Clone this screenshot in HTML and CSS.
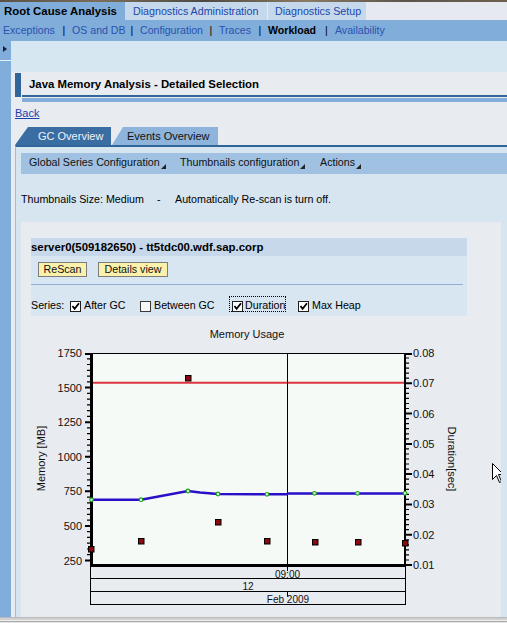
FILE: index.html
```html
<!DOCTYPE html>
<html>
<head>
<meta charset="utf-8">
<title>Java Memory Analysis</title>
<link rel="stylesheet" href="styles.css">
</head>
<body>
<div class="strip"></div>
<div class="l1">
  <div class="t1 sel">Root Cause Analysis</div>
  <div class="t1 da">Diagnostics Administration</div>
  <div class="t1 ds">Diagnostics Setup</div>
</div>
<div class="l2">
  <span class="lk w1">Exceptions</span><span class="sep">|</span><span class="lk w2">OS and DB</span><span class="sep">|</span><span class="lk w3">Configuration</span><span class="sep">|</span><span class="lk w4">Traces</span><span class="sep">|</span><span class="lk w5 cur">Workload</span><span class="sep s5">|</span><span class="lk">Availability</span>
</div>
<div class="main">
  <div class="side"><div class="tog"></div></div>
  <div class="content">
    <div class="banner"></div>
    <div class="page">
      <div class="ptitle"><div class="pbar"></div><div class="ptext">Java Memory Analysis - Detailed Selection</div></div>
      <div class="pstripe"></div>
      <div class="back"><a href="#">Back</a></div>
      <div class="tabs"><div class="tab on">GC Overview</div><div class="tab off">Events Overview</div></div>
      <div class="panel">
        <div class="tbar">
          <span class="it i1">Global Series Configuration<span class="tri"></span></span>
          <span class="it i2">Thumbnails configuration<span class="tri"></span></span>
          <span class="it">Actions<span class="tri"></span></span>
        </div>
        <div class="info"><span class="sz">Thumbnails Size: Medium</span><span class="dash">-</span><span class="auto">Automatically Re-scan is turn off.</span></div>
        <div class="card">
          <div class="srv">
            <div class="srvh">server0(509182650) - tt5tdc00.wdf.sap.corp</div>
            <div class="srvb">
              <div class="btns"><span class="btn b1">ReScan</span><span class="btn b2">Details view</span></div>
              <div class="hr"></div>
              <div class="series">
                <span class="lbl l0t">Series:</span>
                <span class="cb"><svg width="9" height="9" viewBox="0 0 9 9"><polyline points="1.5,4 3.6,6.8 8,1.2" fill="none" stroke="#000" stroke-width="1.8"/></svg></span>
                <span class="lbl l1t">After GC</span>
                <span class="cb un"></span>
                <span class="lbl l2t">Between GC</span>
                <span class="focus">
                  <span class="cb"><svg width="9" height="9" viewBox="0 0 9 9"><polyline points="1.5,4 3.6,6.8 8,1.2" fill="none" stroke="#000" stroke-width="1.8"/></svg></span>
                  <span class="lbl l3t">Duration</span>
                </span>
                <span class="cb c4"><svg width="9" height="9" viewBox="0 0 9 9"><polyline points="1.5,4 3.6,6.8 8,1.2" fill="none" stroke="#000" stroke-width="1.8"/></svg></span>
                <span class="lbl l4t">Max Heap</span>
              </div>
            </div>
          </div>
          <svg class="chart" width="480" height="301" viewBox="21 316 480 301">
            <text x="247" y="338" text-anchor="middle">Memory Usage</text>
            <rect x="92" y="353" width="313" height="212" fill="#F5FAF6"/>
            <line x1="90" y1="353.5" x2="406" y2="353.5" stroke="#000"/>
            <rect x="90" y="353" width="3" height="214"/>
            <rect x="404" y="353" width="2" height="214"/>
            <rect x="90" y="564" width="316" height="3"/>
            <path d="M85 354H90M85 387.6H90M85 422.2H90M85 456.8H90M85 491.3H90M85 525.9H90M85 560.5H90" stroke="#000" stroke-width="2"/>
            <path d="M87 358.8H90M87 364.5H90M87 370.3H90M87 376.1H90M87 381.8H90M87 393.4H90M87 399.1H90M87 404.9H90M87 410.6H90M87 416.4H90M87 427.9H90M87 433.7H90M87 439.5H90M87 445.2H90M87 451H90M87 462.5H90M87 468.3H90M87 474H90M87 479.8H90M87 485.6H90M87 497.1H90M87 502.9H90M87 508.6H90M87 514.4H90M87 520.2H90M87 531.7H90M87 537.4H90M87 543.2H90M87 549H90M87 554.7H90" stroke="#000" stroke-width="1.2"/>
            <path d="M406 354H412M406 383.3H412M406 413.6H412M406 443.9H412M406 474.1H412M406 504.4H412M406 534.7H412M406 565H412" stroke="#000" stroke-width="2"/>
            <path d="M406 358H409M406 363.1H409M406 368.1H409M406 373.2H409M406 378.2H409M406 388.3H409M406 393.4H409M406 398.4H409M406 403.5H409M406 408.5H409M406 418.6H409M406 423.7H409M406 428.7H409M406 433.8H409M406 438.8H409M406 448.9H409M406 454H409M406 459H409M406 464H409M406 469.1H409M406 479.2H409M406 484.2H409M406 489.3H409M406 494.3H409M406 499.4H409M406 509.5H409M406 514.5H409M406 519.6H409M406 524.6H409M406 529.7H409M406 539.8H409M406 544.8H409M406 549.9H409M406 554.9H409M406 560H409" stroke="#000" stroke-width="1.2"/>
            <line x1="93" y1="382.7" x2="404" y2="382.7" stroke="#DF3440" stroke-width="2"/>
            <path d="M287.5 354V571M287.5 591.5V596.5" stroke="#000"/>
            <polyline points="92,499.7 141,499.7 188,491 200,492.6 218,494 287,494.3 288,493.5 404,493.5" fill="none" stroke="#2A0FC8" stroke-width="2.5"/>
            <g fill="#D6FFD0" stroke="#1DA51D" stroke-width="1.2">
              <circle cx="91.5" cy="499.7" r="1.8"/>
              <circle cx="141" cy="499.7" r="1.8"/>
              <circle cx="188" cy="491" r="1.8"/>
              <circle cx="218" cy="494" r="1.8"/>
              <circle cx="267" cy="494.3" r="1.8"/>
              <circle cx="314.5" cy="493.3" r="1.8"/>
              <circle cx="357.5" cy="493.3" r="1.8"/>
              <circle cx="405" cy="493.3" r="1.8"/>
            </g>
            <g fill="#8A0A10" stroke="#000" stroke-width="1">
              <rect x="88.5" y="546.5" width="5.5" height="5.5"/>
              <rect x="138.5" y="538.5" width="5.5" height="5.5"/>
              <rect x="185.5" y="375.5" width="5.5" height="5.5"/>
              <rect x="215.5" y="519.5" width="5.5" height="5.5"/>
              <rect x="264.5" y="538.5" width="5.5" height="5.5"/>
              <rect x="312.5" y="539.5" width="5.5" height="5.5"/>
              <rect x="355.5" y="539.5" width="5.5" height="5.5"/>
              <rect x="402.5" y="540.5" width="5.5" height="5.5"/>
            </g>
            <rect x="90.5" y="566.5" width="315" height="38" fill="none" stroke="#000"/>
            <path d="M90.5 578.5H405.5M90.5 591.5H405.5" stroke="#000"/>
            <g class="yl" text-anchor="end">
              <text x="82" y="357">1750</text>
              <text x="82" y="391.6">1500</text>
              <text x="82" y="426.2">1250</text>
              <text x="82" y="460.8">1000</text>
              <text x="82" y="495.3">750</text>
              <text x="82" y="529.9">500</text>
              <text x="82" y="564.5">250</text>
            </g>
            <g class="yl">
              <text x="413" y="357">0.08</text>
              <text x="413" y="387.3">0.07</text>
              <text x="413" y="417.6">0.06</text>
              <text x="413" y="447.9">0.05</text>
              <text x="413" y="478.1">0.04</text>
              <text x="413" y="508.4">0.03</text>
              <text x="413" y="538.7">0.02</text>
              <text x="413" y="569">0.01</text>
            </g>
            <g class="xl" text-anchor="middle">
              <text x="287.5" y="577.5">09:00</text>
              <text x="248" y="589.5">12</text>
              <text x="288" y="602.7">Feb 2009</text>
            </g>
            <text transform="translate(44.5 458.5) rotate(-90)" text-anchor="middle">Memory [MB]</text>
            <text transform="translate(447.5 459) rotate(90)" text-anchor="middle">Duration[sec]</text>
            <path d="M492.5 463.5V479.5L496.5 475.5L499.5 482.5L501.5 481.5L498.5 474.5H503.5Z" fill="#fff" stroke="#000" stroke-width="1"/>
          </svg>
        </div>
      </div>
    </div>
  </div>
</div>
<div class="hscroll"></div>
</body>
</html>
```

FILE: styles.css
```css
html, body {
  margin: 0;
  padding: 0;
}
body {
  width: 507px;
  height: 623px;
  overflow: hidden;
  background: #E8EBF0;
  font-family: "Liberation Sans", Arial, sans-serif;
  font-size: 10.7px;
  color: #000;
}
.strip {
  height: 2px;
  background: linear-gradient(90deg, #5b5246, #7a6d5a 20%, #4e4a44 40%, #8a7b64 60%, #5c554c 80%, #6e604e);
}
.l1 {
  display: flex;
  height: 18px;
  background: #E6EAF0;
}
.t1 {
  line-height: 18px;
  box-sizing: border-box;
  white-space: nowrap;
  overflow: hidden;
}
.t1.sel {
  width: 125px;
  padding-left: 4px;
  background: #80ADD9;
  font-weight: bold;
  font-size: 11.4px;
}
.t1.da {
  width: 143px;
  padding-left: 8px;
  background: #C6D8EC;
  color: #2046A8;
  border-right: 1px solid #E2EAF3;
}
.t1.ds {
  width: 98px;
  padding-left: 7px;
  background: #C6D8EC;
  color: #2046A8;
}
.l2 {
  height: 21px;
  line-height: 21px;
  background: #80ADD9;
  padding-left: 3px;
  white-space: nowrap;
  overflow: hidden;
  color: #2A52AE;
  font-size: 10.6px;
}
.l2 .lk {
  display: inline-block;
}
.l2 .w1 { width: 53px; }
.l2 .w2 { width: 52px; }
.l2 .w3 { width: 63px; }
.l2 .w4 { width: 33px; }
.l2 .w5 { width: 50px; }
.l2 .sep {
  display: inline-block;
  width: 16px;
  text-align: center;
  color: #000;
}
.l2 .s5 {
  width: 17px;
}
.l2 .cur {
  font-weight: bold;
  color: #000;
}
.main {
  display: flex;
  height: 576px;
  overflow: hidden;
}
.side {
  width: 11px;
  flex: none;
  background: #80ADD9;
}
.tog {
  height: 14px;
  border-bottom: 1px solid #E4EEF7;
}
.tog::after {
  content: "";
  display: block;
  width: 0;
  height: 0;
  margin: 5px 0 0 3px;
  border-left: 4px solid #1C1C2C;
  border-top: 3px solid transparent;
  border-bottom: 3px solid transparent;
}
.content {
  flex: 1;
  min-width: 0;
  display: flex;
  flex-direction: column;
}
.banner {
  height: 31px;
  flex: none;
  background: #D7E7F1;
}
.page {
  flex: 1;
  min-height: 0;
  display: flex;
  flex-direction: column;
  padding-left: 4px;
  background: #E8EBF0;
}
.ptitle {
  display: flex;
  margin-top: 1px;
  height: 24px;
  flex: none;
}
.pbar {
  width: 6px;
  background: #2F6598;
}
.ptext {
  flex: 1;
  margin-left: 1px;
  height: 24px;
  box-sizing: border-box;
  border-bottom: 2px solid #2F6598;
  padding: 1px 0 0 7px;
  line-height: 21px;
  font-weight: bold;
  font-size: 11.4px;
  white-space: nowrap;
}
.pstripe {
  margin: 1px 0 0 7px;
  height: 4px;
  flex: none;
  background: #84AEDA;
}
.back {
  padding-top: 4px;
  height: 14px;
  line-height: 14px;
  margin-bottom: 7px;
  flex: none;
  font-size: 11px;
}
.back a {
  color: #1A3FB0;
  text-decoration: underline;
}
.tabs {
  display: flex;
  height: 18px;
  flex: none;
}
.tab {
  height: 18px;
  line-height: 18px;
  box-sizing: border-box;
  white-space: nowrap;
  font-size: 11px;
}
.tab.on {
  width: 96px;
  padding-left: 23px;
  background: #3A6DA2;
  color: #EEF3F8;
  clip-path: polygon(0 100%, 13px 0, 100% 0, 100% 100%);
}
.tab.off {
  width: 106px;
  margin-left: 1px;
  padding-left: 15px;
  background: #8EB4DB;
  color: #111;
  clip-path: polygon(0 100%, 11px 0, 100% 0, 100% 100%);
}
.panel {
  flex: 1;
  min-height: 0;
  border-top: 2px solid #2F6598;
  border-left: 1px solid #9DBFDF;
  background: #D7E5F1;
  padding: 6px 0 0 5px;
}
.tbar {
  display: flex;
  height: 21px;
  line-height: 19px;
  padding-left: 8px;
  background: #A0C1E1;
  color: #111;
  white-space: nowrap;
}
.tbar .i1 {
  width: 151px;
}
.tbar .i2 {
  width: 140px;
}
.tri {
  display: inline-block;
  width: 0;
  height: 0;
  margin-left: 1px;
  vertical-align: -3px;
  border-left: 5px solid transparent;
  border-bottom: 5px solid #222;
}
.info {
  display: flex;
  margin-top: 18px;
  height: 14px;
  line-height: 14px;
  white-space: nowrap;
}
.info .sz {
  width: 136px;
}
.info .dash {
  width: 18px;
}
.card {
  margin: 16px 6px 0 0;
  padding-top: 16px;
  background: #E8EBF0;
}
.srv {
  margin: 0 34px 0 10px;
}
.srvh {
  height: 18px;
  line-height: 18px;
  background: #C6D8EA;
  font-weight: bold;
  font-size: 11.4px;
  white-space: nowrap;
}
.srvb {
  height: 60px;
  background: #D7E6F1;
}
.btns {
  display: flex;
  padding: 6px 0 0 7px;
}
.btn {
  height: 15px;
  box-sizing: border-box;
  border: 1px solid #7C7C7C;
  background: #FBF1AA;
  line-height: 13px;
  text-align: center;
  color: #111;
}
.b1 {
  width: 49px;
}
.b2 {
  width: 70px;
  margin-left: 11px;
}
.hr {
  margin: 7px 4px 0 0;
  height: 1px;
  background: #8FB0D0;
}
.series {
  display: flex;
  align-items: flex-start;
  padding-top: 13px;
  white-space: nowrap;
}
.lbl {
  line-height: 14px;
  flex: none;
}
.cb {
  width: 11px;
  height: 11px;
  box-sizing: border-box;
  border: 1px solid #1E1E1E;
  background: #fff;
  margin-top: 3px;
  flex: none;
  display: flex;
}
.cb svg {
  display: block;
}
.cb.un {
  background: #F7F7F7;
  border-color: #3A3A3A;
}
.l0t { width: 39px; }
.l1t { width: 56px; margin-left: 3px; }
.l2t { width: 75px; margin-left: 3px; }
.focus {
  display: flex;
  align-items: flex-start;
  margin-top: -2px;
  height: 16px;
  box-sizing: border-box;
  border: 1px dotted #000;
  padding: 0 1px 0 2px;
  flex: none;
}
.focus .cb {
  margin-top: 4px;
}
.focus .lbl {
  margin-top: 1px;
}
.l3t { width: 39px; margin-left: 2px; }
.c4 { margin-left: 12px; }
.l4t { margin-left: 3px; }
.chart {
  display: block;
}
.chart text {
  font-family: "Liberation Sans", Arial, sans-serif;
  font-size: 11px;
  fill: #111;
}
.chart .xl text {
  font-size: 10px;
}
.hscroll {
  height: 6px;
  background: linear-gradient(#B9B9B9 0 1px, #D0D0D0 1px 3px, #EEEEEE 3px 4px, #A9A9A9 4px 5px, #E6E6E6 5px);
}
```
